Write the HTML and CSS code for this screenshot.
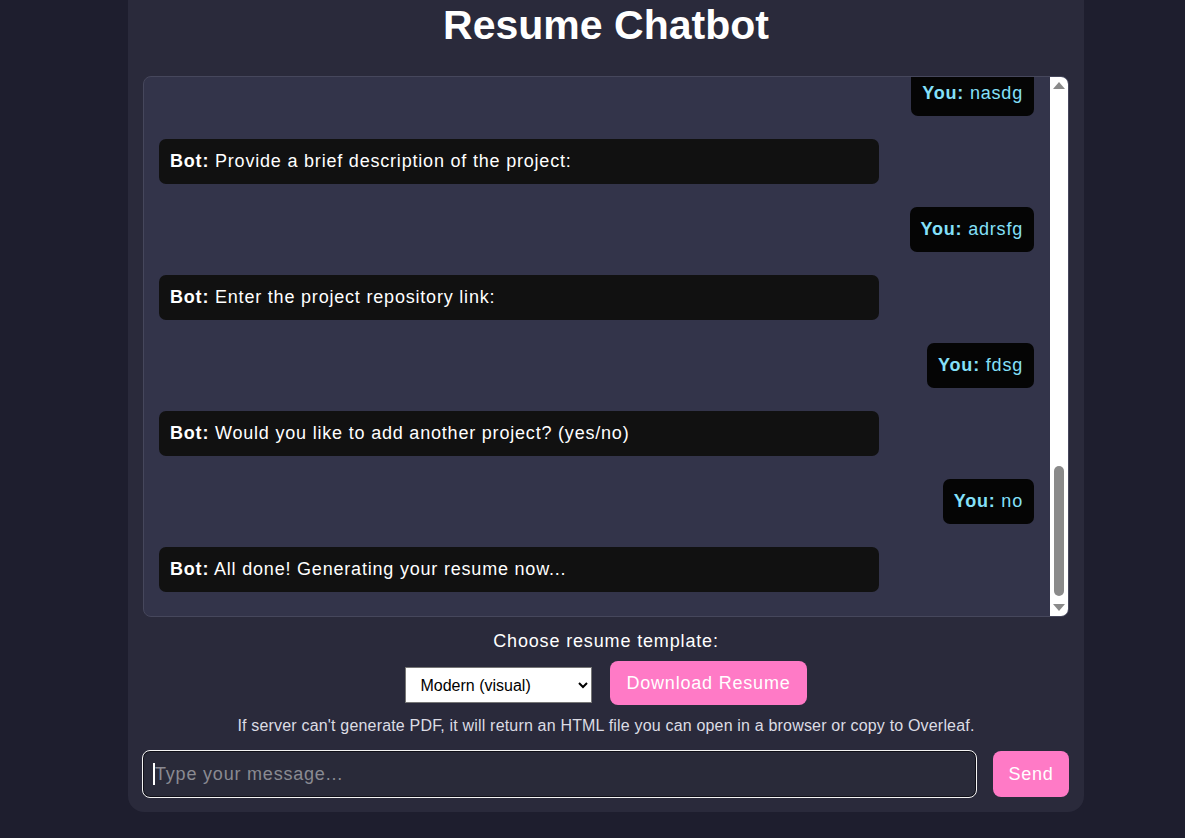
FILE: index.html
```html
<!DOCTYPE html>
<html lang="en">
<head>
<meta charset="utf-8">
<title>Resume Chatbot</title>
<link rel="stylesheet" href="styles.css">
</head>
<body>
<div class="app">
  <h1 class="title">Resume Chatbot</h1>
  <div class="chat">
    <div class="chat-log">
      <div class="msg user"><b>You:</b> nasdg</div>
      <div class="msg bot"><b>Bot:</b> Provide a brief description of the project:</div>
      <div class="msg user"><b>You:</b> adrsfg</div>
      <div class="msg bot"><b>Bot:</b> Enter the project repository link:</div>
      <div class="msg user"><b>You:</b> fdsg</div>
      <div class="msg bot"><b>Bot:</b> Would you like to add another project? (yes/no)</div>
      <div class="msg user"><b>You:</b> no</div>
      <div class="msg bot"><b>Bot:</b> All done! Generating your resume now...</div>
    </div>
    <div class="scrollbar">
      <span class="arrow up"></span>
      <span class="track"><span class="thumb"></span></span>
      <span class="arrow down"></span>
    </div>
  </div>
  <div class="controls">
    <div class="label">Choose resume template:</div>
    <div class="row">
      <select class="template">
        <option>Modern (visual)</option>
        <option>Classic</option>
      </select>
      <button class="btn download">Download Resume</button>
    </div>
    <div class="note">If server can't generate PDF, it will return an HTML file you can open in a browser or copy to Overleaf.</div>
  </div>
  <div class="composer">
    <div class="input"><span class="caret"></span><span class="placeholder">Type your message...</span></div>
    <button class="btn send">Send</button>
  </div>
</div>
</body>
</html>
```
FILE: styles.css
```css
html, body {
  margin: 0;
  padding: 0;
  background: #1e1e2e;
  font-family: "Liberation Sans", Arial, sans-serif;
  color: #fff;
  overflow: hidden;
}
body {
  padding-left: 27px;
}
.app {
  width: 956px;
  box-sizing: border-box;
  margin: -18px auto 0;
  background: #2a2a3b;
  border-radius: 16px;
  padding: 20px 15px 14px;
}
.title {
  margin: 0 0 27px;
  text-align: center;
  font-size: 41px;
  line-height: 47px;
  font-weight: bold;
}
.chat {
  height: 541px;
  box-sizing: border-box;
  border: 1px solid #46475c;
  border-radius: 8px;
  background: #33344a;
  display: flex;
  overflow: hidden;
}
.chat-log {
  flex: 1;
  display: flex;
  flex-direction: column;
  justify-content: flex-end;
  gap: 23px;
  padding: 0 16px 24px 15px;
  overflow: hidden;
}
.msg {
  font-size: 18px;
  line-height: 21px;
  letter-spacing: 0.8px;
  padding: 12px 11px;
  border-radius: 7px;
}
.msg b { font-weight: bold; }
.bot {
  background: #111111;
  width: 720px;
  box-sizing: border-box;
}
.user {
  align-self: flex-end;
  background: #050505;
  color: #84e0fa;
}
.scrollbar {
  width: 18px;
  background: #fff;
  display: flex;
  flex-direction: column;
  align-items: center;
}
.arrow {
  width: 0;
  height: 0;
  border-left: 6px solid transparent;
  border-right: 6px solid transparent;
  margin: 5px 0;
}
.arrow.up { border-bottom: 7px solid #8a8a8a; }
.arrow.down { border-top: 7px solid #8a8a8a; }
.track {
  flex: 1;
  width: 100%;
  display: flex;
  flex-direction: column;
  justify-content: flex-end;
  align-items: center;
}
.thumb {
  width: 10px;
  height: 130px;
  border-radius: 5px;
  background: #8a8a8a;
  margin-bottom: 3px;
}
.controls {
  text-align: center;
  padding-top: 14px;
}
.label {
  font-size: 18px;
  line-height: 21px;
  letter-spacing: 0.85px;
}
.row {
  display: flex;
  justify-content: center;
  align-items: center;
  gap: 18px;
  margin-top: 9px;
}
.template {
  width: 187px;
  height: 36px;
  margin-top: 4px;
  font-family: "Liberation Sans", Arial, sans-serif;
  font-size: 16px;
  padding: 0 10px;
  background: #fff;
  color: #000;
  border: 1px solid #767676;
  border-radius: 0;
}
.btn {
  border: none;
  border-radius: 8px;
  background: #ff7ac6;
  color: #fff;
  font-family: "Liberation Sans", Arial, sans-serif;
  font-size: 18px;
  letter-spacing: 0.8px;
  cursor: pointer;
}
.download {
  height: 44px;
  padding: 0 16px;
}
.note {
  font-size: 16px;
  line-height: 18px;
  letter-spacing: 0.18px;
  color: #dcdce4;
  margin-top: 12px;
}
.composer {
  display: flex;
  align-items: center;
  gap: 16px;
  margin-top: 15px;
}
.input {
  flex: 1;
  height: 48px;
  box-sizing: border-box;
  border: 1px solid #f4f4f4;
  box-shadow: inset 0 0 0 1px #101018;
  border-radius: 8px;
  background: #292a39;
  display: flex;
  align-items: center;
  padding: 0 10px;
  margin-left: -1px;
}
.caret {
  width: 2px;
  height: 22px;
  background: #fff;
}
.placeholder {
  font-size: 18px;
  letter-spacing: 0.8px;
  color: #8a8a92;
}
.send {
  height: 46px;
  width: 76px;
}
```
